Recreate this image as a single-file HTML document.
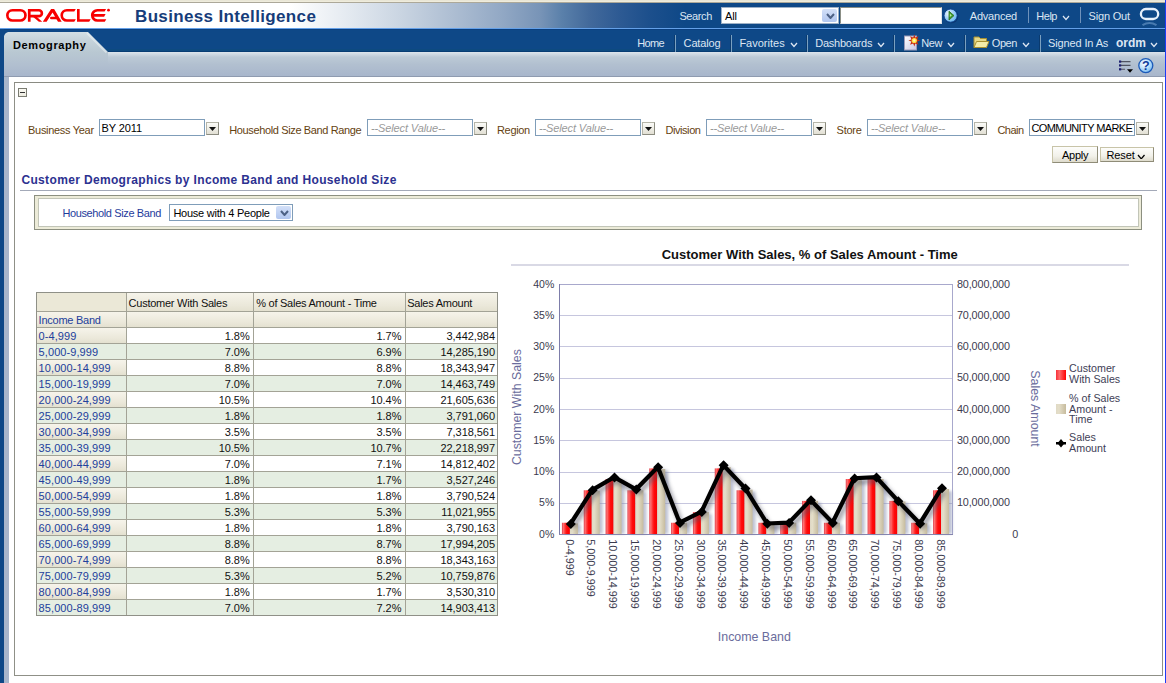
<!DOCTYPE html><html><head><meta charset="utf-8"><style>html,body{margin:0;padding:0;}body{width:1166px;height:683px;overflow:hidden;position:relative;background:#fff;font-family:"Liberation Sans", sans-serif;}body div,body svg{position:absolute;white-space:nowrap;}</style></head><body><div style="left:0px;top:0px;width:1166px;height:1px;background:#e9e6d6"></div>
<div style="left:0px;top:1px;width:1166px;height:1px;background:#efecdc"></div>
<div style="left:0px;top:2px;width:1166px;height:1px;background:#aca899"></div>
<div style="left:0px;top:3px;width:1166px;height:25px;background:linear-gradient(to right,#fff 0px,#fff 290px,#e3e9f0 350px,#cad5e2 400px,#afbfd3 450px,#93a9c5 500px,#7894b7 540px,#5a80aa 562px,#42699b 590px,#2d5a93 620px,#1c4f8c 650px,#0e4887 685px,#0e4887 1166px)"></div>
<div style="left:0px;top:28px;width:1166px;height:1px;background:#64a0e8"></div>
<div style="left:0px;top:29px;width:1166px;height:1px;background:#0a3f7f"></div>
<div style="left:0px;top:30px;width:1166px;height:19px;background:#0e4887"></div>
<div style="left:0px;top:49px;width:1166px;height:2px;background:#0d4a80"></div>
<div style="left:0px;top:51px;width:1166px;height:1px;background:#073d73"></div>
<div style="left:0px;top:52px;width:1166px;height:24px;background:linear-gradient(#dde5ec 0px,#bccad6 5px,#b2c0d0 12px,#a9b7cc 23px)"></div>
<div style="left:0px;top:76px;width:1166px;height:1px;background:#8f9bb0"></div>
<div style="left:0px;top:29px;width:4px;height:654px;background:#0e4887"></div>
<div style="left:4px;top:77px;width:5px;height:606px;background:#a8b6cb"></div>
<div style="left:1165px;top:0px;width:1px;height:683px;background:#1d3cf5"></div>
<div style="left:4px;top:32px;width:104px;height:44px;background:linear-gradient(#d3dfe5 0px,#c6d3db 8px,#b9c8d2 20px,#b2c0d0 32px,#a9b7cc 43px);clip-path:polygon(0 4px,1px 2px,2px 1px,4px 0,84px 0,104px 20px,104px 44px,0 44px);"></div>
<svg style="left:0;top:0" width="120" height="60"><path d="M87 33 L106.5 52.5" stroke="#eef4f6" stroke-width="2" opacity="0.55"/></svg>
<div style="left:13px;top:37.99px;font-size:11px;line-height:14px;color:#000;font-weight:bold;letter-spacing:0.62px;">Demography</div>
<svg style="left:0;top:0" width="120" height="28" viewBox="0 0 120 28"><g fill="#f80000">
<path fill="none" stroke="#f80000" stroke-width="2.65" d="M12.45 10.23 H20.35 A5.12 5.12 0 0 1 20.35 20.47 H12.45 A5.12 5.12 0 0 1 12.45 10.23 Z"/>
<path fill-rule="evenodd" d="M27.9 8.9 H38.95 A4.25 4.25 0 0 1 38.95 17.4 H30.6 V21.8 H27.9 Z M30.6 11.55 V14.75 H38.95 A1.6 1.6 0 0 0 38.95 11.55 Z"/>
<path d="M31.1 15.3 H35 L42.2 21.8 H38.9 Z"/>
<path d="M42.8 21.8 L51.1 8.9 H54.1 L61.7 21.8 H58 L52.55 12.55 L46.6 21.8 Z"/>
<path d="M51.35 16.65 H56.5 L57.2 19.35 H51.35 A1.35 1.35 0 0 1 51.35 16.65 Z"/>
<path d="M66.85 8.9 H75.8 L74.3 11.55 H66.85 A3.8 3.8 0 0 0 66.85 19.15 H75.8 L74.3 21.8 H66.85 A6.45 6.45 0 0 1 66.85 8.9 Z"/>
<path d="M77 8.9 H79.65 V19.15 H90.7 L89.2 21.8 H77 Z"/>
<path d="M97.35 8.9 H106.1 L104.6 11.55 H97.35 A3.8 3.8 0 0 0 93.8 14.05 H105.6 L104.1 16.7 H93.8 A3.8 3.8 0 0 0 97.35 19.15 H106.3 L104.8 21.8 H97.35 A6.45 6.45 0 0 1 97.35 8.9 Z"/>
<circle cx="108.5" cy="10.2" r="1.4"/>
</g></svg>
<div style="left:135px;top:6.01px;font-size:17px;line-height:21px;color:#163c7a;font-weight:bold;letter-spacing:0.35px;">Business Intelligence</div>
<div style="left:679.4px;top:9.19px;font-size:11px;line-height:14px;color:#dce6f2;letter-spacing:-0.38px;">Search</div>
<div style="left:721px;top:7px;width:118px;height:17px;background:#fff;box-sizing:border-box;border:1px solid #9eb0c6"></div>
<div style="left:725px;top:9.19px;font-size:11px;line-height:14px;color:#000;letter-spacing:-0.2px;">All</div>
<div style="left:822px;top:9px;width:15px;height:13px;background:linear-gradient(#d3e0f8,#b1c6ef);border-radius:2px"></div>
<svg style="left:825.5px;top:12.5px" width="9" height="6"><path d="M1 1 L4.5 5 L8 1" fill="none" stroke="#4d6185" stroke-width="2"/></svg>
<div style="left:840px;top:7px;width:102px;height:17px;background:#fff;box-sizing:border-box;border:1px solid #8b8f86;border-right-color:#dfe3e8;border-bottom-color:#dfe3e8"></div>
<svg style="left:942px;top:7px" width="18" height="18"><defs><radialGradient id="gb" cx="35%" cy="35%" r="75%"><stop offset="0" stop-color="#f0f8ff"/><stop offset="0.45" stop-color="#a8d4fa"/><stop offset="1" stop-color="#5ab0f0"/></radialGradient></defs><circle cx="9.3" cy="9.3" r="7" fill="#062a60" opacity="0.6"/><circle cx="8.6" cy="8.6" r="6.6" fill="url(#gb)" stroke="#0d3f8a" stroke-width="0.9"/><path d="M7 4.2 L12 8.6 L7 13 Z" fill="#3c9a2c" stroke="#2a6e1c" stroke-width="0.8" stroke-linejoin="round"/><path d="M7.8 6.5 L9.8 8.4 L7.8 10 Z" fill="#b8e8a0"/></svg>
<div style="left:969.8px;top:9.19px;font-size:11px;line-height:14px;color:#dce6f2;letter-spacing:-0.22px;">Advanced</div>
<div style="left:1028px;top:7px;width:1px;height:16px;background:#6f92bb"></div>
<div style="left:1036.3px;top:9.19px;font-size:11px;line-height:14px;color:#dce6f2;letter-spacing:-0.48px;">Help</div>
<svg style="left:1062px;top:15px" width="8" height="5.5"><path d="M1 1 L4.0 4.5 L7 1" fill="none" stroke="#dce6f2" stroke-width="1.2"/></svg>
<div style="left:1080px;top:7px;width:1px;height:16px;background:#6f92bb"></div>
<div style="left:1088.6px;top:9.19px;font-size:11px;line-height:14px;color:#dce6f2;letter-spacing:-0.2px;">Sign Out</div>
<svg style="left:1138px;top:6px" width="24" height="22"><rect x="2.9" y="3" width="17.3" height="10" rx="5" ry="5" fill="none" stroke="#e6f0fb" stroke-width="2.3"/><path d="M4.5 19.2 Q11.5 14.8 18.5 19.2" fill="none" stroke="#6f9ccc" stroke-width="2" opacity="0.6"/></svg>
<div style="left:637.3px;top:36.39px;font-size:11px;line-height:14px;color:#dce6f2;letter-spacing:-0.66px;">Home</div>
<div style="left:674px;top:35px;width:1px;height:17px;background:#0a3a6e"></div>
<div style="left:675px;top:35px;width:1px;height:17px;background:#7aa0c0"></div>
<div style="left:683.6px;top:36.39px;font-size:11px;line-height:14px;color:#dce6f2;letter-spacing:-0.16px;">Catalog</div>
<div style="left:730px;top:35px;width:1px;height:17px;background:#0a3a6e"></div>
<div style="left:731px;top:35px;width:1px;height:17px;background:#7aa0c0"></div>
<div style="left:739.4px;top:36.39px;font-size:11px;line-height:14px;color:#dce6f2;">Favorites</div>
<svg style="left:789.5px;top:42px" width="8" height="5.5"><path d="M1 1 L4.0 4.5 L7 1" fill="none" stroke="#dce6f2" stroke-width="1.3"/></svg>
<div style="left:806px;top:35px;width:1px;height:17px;background:#0a3a6e"></div>
<div style="left:807px;top:35px;width:1px;height:17px;background:#7aa0c0"></div>
<div style="left:815.2px;top:36.39px;font-size:11px;line-height:14px;color:#dce6f2;letter-spacing:-0.23px;">Dashboards</div>
<svg style="left:877px;top:42px" width="8" height="5.5"><path d="M1 1 L4.0 4.5 L7 1" fill="none" stroke="#dce6f2" stroke-width="1.3"/></svg>
<div style="left:893px;top:35px;width:1px;height:17px;background:#0a3a6e"></div>
<div style="left:894px;top:35px;width:1px;height:17px;background:#7aa0c0"></div>
<svg style="left:903px;top:34px" width="18" height="17"><defs><linearGradient id="pg" x1="0" x2="1" y1="0" y2="1"><stop offset="0" stop-color="#ffffff"/><stop offset="1" stop-color="#c8c8e4"/></linearGradient></defs><rect x="1.5" y="2" width="12" height="14" fill="url(#pg)" stroke="#9a9ab8" stroke-width="1"/><path d="M11.3 0.6 L12.4 3.6 L15.5 2.3 L14.2 5.4 L17.2 6.5 L14.2 7.6 L15.5 10.7 L12.4 9.4 L11.3 12.4 L10.2 9.4 L7.1 10.7 L8.4 7.6 L5.4 6.5 L8.4 5.4 L7.1 2.3 L10.2 3.6 Z" fill="#c83010"/><circle cx="11.3" cy="6.5" r="2.6" fill="#ffe040"/><circle cx="11.3" cy="6.5" r="1.2" fill="#fff8c0"/></svg>
<div style="left:921.2px;top:36.39px;font-size:11px;line-height:14px;color:#dce6f2;letter-spacing:-0.4px;">New</div>
<svg style="left:947px;top:42px" width="8" height="5.5"><path d="M1 1 L4.0 4.5 L7 1" fill="none" stroke="#dce6f2" stroke-width="1.3"/></svg>
<div style="left:964px;top:35px;width:1px;height:17px;background:#0a3a6e"></div>
<div style="left:965px;top:35px;width:1px;height:17px;background:#7aa0c0"></div>
<svg style="left:973px;top:35px" width="17" height="14"><path d="M1 2 H6 L7.5 3.5 H13.5 V12.5 H1 Z" fill="#e6d888" stroke="#a89030" stroke-width="1"/><path d="M1 12.5 L3.5 6.5 H16 L13.5 12.5 Z" fill="#f4eca8" stroke="#a89030" stroke-width="1" stroke-linejoin="round"/></svg>
<div style="left:991.8px;top:36.39px;font-size:11px;line-height:14px;color:#dce6f2;letter-spacing:-0.43px;">Open</div>
<svg style="left:1022px;top:42px" width="8" height="5.5"><path d="M1 1 L4.0 4.5 L7 1" fill="none" stroke="#dce6f2" stroke-width="1.3"/></svg>
<div style="left:1039px;top:35px;width:1px;height:17px;background:#0a3a6e"></div>
<div style="left:1040px;top:35px;width:1px;height:17px;background:#7aa0c0"></div>
<div style="left:1048px;top:36.39px;font-size:11px;line-height:14px;color:#dce6f2;letter-spacing:-0.13px;">Signed In As</div>
<div style="left:1116px;top:35.54px;font-size:12px;line-height:15px;color:#dce6f2;font-weight:bold;">ordm</div>
<svg style="left:1150px;top:42px" width="8" height="5.5"><path d="M1 1 L4.0 4.5 L7 1" fill="none" stroke="#dce6f2" stroke-width="1.3"/></svg>
<svg style="left:1118px;top:59px" width="17" height="16"><g stroke="#505460" stroke-width="1.1"><path d="M3 2.6 H12.5 M3 6.4 H12.5 M3 10.3 H7"/></g><g fill="#1c1f70"><rect x="1" y="1.5" width="2.2" height="2.2"/><rect x="1" y="5.3" width="2.2" height="2.2"/><rect x="1" y="9.2" width="2.2" height="2.2"/></g><path d="M9 10.2 H15 L12 13.8 Z" fill="#000"/></svg>
<svg style="left:1137px;top:57px" width="18" height="18"><defs><radialGradient id="hb" cx="40%" cy="35%" r="70%"><stop offset="0" stop-color="#ffffff"/><stop offset="0.5" stop-color="#bfe2fc"/><stop offset="1" stop-color="#6fb4ef"/></radialGradient></defs><circle cx="8.8" cy="8.6" r="7" fill="url(#hb)" stroke="#1b5ab8" stroke-width="1.3"/><text x="8.8" y="12.9" text-anchor="middle" font-family="Liberation Sans" font-weight="bold" font-size="12.5" fill="#0e3c9a">?</text></svg>
<div style="left:14px;top:82px;width:1149px;height:594px;box-sizing:border-box;border:1px solid #8f9087;border-top-color:#8a8b82"></div>
<div style="left:18px;top:88px;width:9px;height:9px;box-sizing:border-box;border:1px solid #7b7c72;background:linear-gradient(#fbfaf3,#ecebe0)"></div>
<div style="left:20px;top:92px;width:5px;height:1px;background:#333"></div>
<div style="left:28.1px;top:122.89px;font-size:11px;line-height:14px;color:#654210;letter-spacing:-0.31px;">Business Year</div>
<div style="left:99px;top:119px;width:106px;height:17px;box-sizing:border-box;border:1px solid #7f9db9;background:#fff"></div>
<div style="left:101.5px;top:120.69px;font-size:11px;line-height:14px;color:#000;letter-spacing:-0.1px;">BY 2011</div>
<div style="left:206px;top:121.5px;width:13px;height:13px;box-sizing:border-box;border:1px solid #b5b5a8;border-right-color:#8c8c80;border-bottom-color:#8c8c80;background:linear-gradient(#fbfbf8,#e2e0d4)"></div>
<svg style="left:209px;top:126.5px" width="8" height="5"><path d="M0 0 H7 L3.5 4 Z" fill="#111"/></svg>
<div style="left:229.3px;top:122.89px;font-size:11px;line-height:14px;color:#654210;letter-spacing:-0.37px;">Household Size Band Range</div>
<div style="left:367px;top:119px;width:106px;height:17px;box-sizing:border-box;border:1px solid #7f9db9;background:#fff"></div>
<div style="left:371px;top:120.89px;font-size:11px;line-height:14px;color:#9a9a9a;letter-spacing:-0.12px;font-style:italic;">--Select Value--</div>
<div style="left:474px;top:121.5px;width:13px;height:13px;box-sizing:border-box;border:1px solid #b5b5a8;border-right-color:#8c8c80;border-bottom-color:#8c8c80;background:linear-gradient(#fbfbf8,#e2e0d4)"></div>
<svg style="left:477px;top:126.5px" width="8" height="5"><path d="M0 0 H7 L3.5 4 Z" fill="#111"/></svg>
<div style="left:497px;top:122.89px;font-size:11px;line-height:14px;color:#654210;letter-spacing:-0.34px;">Region</div>
<div style="left:535px;top:119px;width:106px;height:17px;box-sizing:border-box;border:1px solid #7f9db9;background:#fff"></div>
<div style="left:539px;top:120.89px;font-size:11px;line-height:14px;color:#9a9a9a;letter-spacing:-0.12px;font-style:italic;">--Select Value--</div>
<div style="left:642px;top:121.5px;width:13px;height:13px;box-sizing:border-box;border:1px solid #b5b5a8;border-right-color:#8c8c80;border-bottom-color:#8c8c80;background:linear-gradient(#fbfbf8,#e2e0d4)"></div>
<svg style="left:645px;top:126.5px" width="8" height="5"><path d="M0 0 H7 L3.5 4 Z" fill="#111"/></svg>
<div style="left:665.4px;top:122.89px;font-size:11px;line-height:14px;color:#654210;letter-spacing:-0.42px;">Division</div>
<div style="left:706px;top:119px;width:106px;height:17px;box-sizing:border-box;border:1px solid #7f9db9;background:#fff"></div>
<div style="left:710px;top:120.89px;font-size:11px;line-height:14px;color:#9a9a9a;letter-spacing:-0.12px;font-style:italic;">--Select Value--</div>
<div style="left:813px;top:121.5px;width:13px;height:13px;box-sizing:border-box;border:1px solid #b5b5a8;border-right-color:#8c8c80;border-bottom-color:#8c8c80;background:linear-gradient(#fbfbf8,#e2e0d4)"></div>
<svg style="left:816px;top:126.5px" width="8" height="5"><path d="M0 0 H7 L3.5 4 Z" fill="#111"/></svg>
<div style="left:836.6px;top:122.89px;font-size:11px;line-height:14px;color:#654210;letter-spacing:-0.26px;">Store</div>
<div style="left:867px;top:119px;width:106px;height:17px;box-sizing:border-box;border:1px solid #7f9db9;background:#fff"></div>
<div style="left:871px;top:120.89px;font-size:11px;line-height:14px;color:#9a9a9a;letter-spacing:-0.12px;font-style:italic;">--Select Value--</div>
<div style="left:974px;top:121.5px;width:13px;height:13px;box-sizing:border-box;border:1px solid #b5b5a8;border-right-color:#8c8c80;border-bottom-color:#8c8c80;background:linear-gradient(#fbfbf8,#e2e0d4)"></div>
<svg style="left:977px;top:126.5px" width="8" height="5"><path d="M0 0 H7 L3.5 4 Z" fill="#111"/></svg>
<div style="left:997.4px;top:122.89px;font-size:11px;line-height:14px;color:#654210;letter-spacing:-0.5px;">Chain</div>
<div style="left:1029px;top:119px;width:106px;height:17px;box-sizing:border-box;border:1px solid #7f9db9;background:#fff"></div>
<div style="left:1030px;top:120px;width:104px;height:15px;overflow:hidden"><div style="left:1.5px;top:1px;font-size:11px;line-height:15px;color:#000;letter-spacing:-0.6px">COMMUNITY MARKET</div></div>
<div style="left:1136px;top:121.5px;width:13px;height:13px;box-sizing:border-box;border:1px solid #b5b5a8;border-right-color:#8c8c80;border-bottom-color:#8c8c80;background:linear-gradient(#fbfbf8,#e2e0d4)"></div>
<svg style="left:1139px;top:126.5px" width="8" height="5"><path d="M0 0 H7 L3.5 4 Z" fill="#111"/></svg>
<div style="left:1052px;top:146px;width:46px;height:17px;box-sizing:border-box;border:1px solid #c8c4a8;border-right-color:#8f8c78;border-bottom-color:#8f8c78;background:linear-gradient(#fdfdfb,#f2f1ea 60%,#dedbcc)"></div>
<div style="left:1062px;top:148.39px;font-size:11px;line-height:14px;color:#000;letter-spacing:-0.27px;">Apply</div>
<div style="left:1100px;top:147px;width:54px;height:15px;box-sizing:border-box;border:1px solid #c8c4a8;border-right-color:#8f8c78;border-bottom-color:#8f8c78;background:linear-gradient(#fdfdfb,#f2f1ea 60%,#dedbcc)"></div>
<div style="left:1106.4px;top:148.39px;font-size:11px;line-height:14px;color:#000;letter-spacing:-0.1px;">Reset</div>
<svg style="left:1137.2px;top:153.6px" width="8.5" height="5.8"><path d="M1 1 L4.25 4.8 L7.5 1" fill="none" stroke="#000" stroke-width="1.3"/></svg>
<div style="left:21.4px;top:173.44px;font-size:12px;line-height:15px;color:#2c3190;font-weight:bold;letter-spacing:0.35px;">Customer Demographics by Income Band and Household Size</div>
<div style="left:20px;top:190px;width:1137px;height:1px;background:#a3a9b8"></div>
<div style="left:34px;top:195px;width:1108px;height:35px;box-sizing:border-box;border:1px solid #8c8f80;background:#ecebd8"></div>
<div style="left:38px;top:198px;width:1101px;height:29px;box-sizing:border-box;border:1px solid #c2c5b8;background:#fff"></div>
<div style="left:62.4px;top:205.89px;font-size:11px;line-height:14px;color:#1f3c9c;letter-spacing:-0.38px;">Household Size Band</div>
<div style="left:169px;top:204px;width:124px;height:17px;box-sizing:border-box;border:1px solid #7f9db9;background:#fff"></div>
<div style="left:173.4px;top:205.79px;font-size:11px;line-height:14px;color:#000;letter-spacing:-0.24px;">House with 4 People</div>
<div style="left:276px;top:206px;width:15px;height:13px;background:linear-gradient(#d3e0f8,#b1c6ef);border-radius:2px"></div>
<svg style="left:279.5px;top:209.5px" width="9" height="6"><path d="M1 1 L4.5 5 L8 1" fill="none" stroke="#4d6185" stroke-width="2"/></svg>
<div style="left:36px;top:292px;width:90px;height:19px;background:#ebe8d7"></div>
<div style="left:126px;top:292px;width:372px;height:19px;background:linear-gradient(#f7f5ec,#ebe8da 70%,#e4e1d0)"></div>
<div style="left:36px;top:311px;width:462px;height:16px;background:linear-gradient(#f7f5ec,#ebe8da 70%,#e4e1d0)"></div>
<div style="left:36px;top:327px;width:90px;height:16px;background:linear-gradient(#f7f5ec,#ebe8da 70%,#e4e1d0)"></div>
<div style="left:36px;top:343px;width:462px;height:16px;background:#e5eee2"></div>
<div style="left:36px;top:359px;width:90px;height:16px;background:linear-gradient(#f7f5ec,#ebe8da 70%,#e4e1d0)"></div>
<div style="left:36px;top:375px;width:462px;height:16px;background:#e5eee2"></div>
<div style="left:36px;top:391px;width:90px;height:16px;background:linear-gradient(#f7f5ec,#ebe8da 70%,#e4e1d0)"></div>
<div style="left:36px;top:407px;width:462px;height:16px;background:#e5eee2"></div>
<div style="left:36px;top:423px;width:90px;height:16px;background:linear-gradient(#f7f5ec,#ebe8da 70%,#e4e1d0)"></div>
<div style="left:36px;top:439px;width:462px;height:16px;background:#e5eee2"></div>
<div style="left:36px;top:455px;width:90px;height:16px;background:linear-gradient(#f7f5ec,#ebe8da 70%,#e4e1d0)"></div>
<div style="left:36px;top:471px;width:462px;height:16px;background:#e5eee2"></div>
<div style="left:36px;top:487px;width:90px;height:16px;background:linear-gradient(#f7f5ec,#ebe8da 70%,#e4e1d0)"></div>
<div style="left:36px;top:503px;width:462px;height:16px;background:#e5eee2"></div>
<div style="left:36px;top:519px;width:90px;height:16px;background:linear-gradient(#f7f5ec,#ebe8da 70%,#e4e1d0)"></div>
<div style="left:36px;top:535px;width:462px;height:16px;background:#e5eee2"></div>
<div style="left:36px;top:551px;width:90px;height:16px;background:linear-gradient(#f7f5ec,#ebe8da 70%,#e4e1d0)"></div>
<div style="left:36px;top:567px;width:462px;height:16px;background:#e5eee2"></div>
<div style="left:36px;top:583px;width:90px;height:16px;background:linear-gradient(#f7f5ec,#ebe8da 70%,#e4e1d0)"></div>
<div style="left:36px;top:599px;width:462px;height:16px;background:#e5eee2"></div>
<div style="left:126px;top:292px;width:1px;height:323px;background:#a3a396"></div>
<div style="left:253px;top:292px;width:1px;height:323px;background:#a3a396"></div>
<div style="left:405px;top:292px;width:1px;height:323px;background:#a3a396"></div>
<div style="left:36px;top:311px;width:462px;height:1px;background:#a3a396"></div>
<div style="left:36px;top:327px;width:462px;height:1px;background:#a3a396"></div>
<div style="left:36px;top:343px;width:462px;height:1px;background:#a3a396"></div>
<div style="left:36px;top:359px;width:462px;height:1px;background:#a3a396"></div>
<div style="left:36px;top:375px;width:462px;height:1px;background:#a3a396"></div>
<div style="left:36px;top:391px;width:462px;height:1px;background:#a3a396"></div>
<div style="left:36px;top:407px;width:462px;height:1px;background:#a3a396"></div>
<div style="left:36px;top:423px;width:462px;height:1px;background:#a3a396"></div>
<div style="left:36px;top:439px;width:462px;height:1px;background:#a3a396"></div>
<div style="left:36px;top:455px;width:462px;height:1px;background:#a3a396"></div>
<div style="left:36px;top:471px;width:462px;height:1px;background:#a3a396"></div>
<div style="left:36px;top:487px;width:462px;height:1px;background:#a3a396"></div>
<div style="left:36px;top:503px;width:462px;height:1px;background:#a3a396"></div>
<div style="left:36px;top:519px;width:462px;height:1px;background:#a3a396"></div>
<div style="left:36px;top:535px;width:462px;height:1px;background:#a3a396"></div>
<div style="left:36px;top:551px;width:462px;height:1px;background:#a3a396"></div>
<div style="left:36px;top:567px;width:462px;height:1px;background:#a3a396"></div>
<div style="left:36px;top:583px;width:462px;height:1px;background:#a3a396"></div>
<div style="left:36px;top:599px;width:462px;height:1px;background:#a3a396"></div>
<div style="left:36px;top:292px;width:462px;height:324px;box-sizing:border-box;border:1px solid #8f9087"></div>
<div style="left:128.6px;top:295.79px;font-size:11px;line-height:14px;color:#111;letter-spacing:-0.25px;">Customer With Sales</div>
<div style="left:256.2px;top:295.79px;font-size:11px;line-height:14px;color:#111;letter-spacing:-0.25px;">% of Sales Amount - Time</div>
<div style="left:407.2px;top:295.79px;font-size:11px;line-height:14px;color:#111;letter-spacing:-0.25px;">Sales Amount</div>
<div style="left:38.6px;top:312.59px;font-size:11px;line-height:14px;color:#22409c;letter-spacing:-0.25px;">Income Band</div>
<div style="left:38.6px;top:329.49px;font-size:11px;line-height:14px;color:#22409c;letter-spacing:0.08px;">0-4,999</div>
<div style="right:916.4px;text-align:right;top:329.49px;font-size:11px;line-height:14px;color:#111;letter-spacing:-0.05px;">1.8%</div>
<div style="right:764.6px;text-align:right;top:329.49px;font-size:11px;line-height:14px;color:#111;letter-spacing:-0.05px;">1.7%</div>
<div style="right:671px;text-align:right;top:329.49px;font-size:11px;line-height:14px;color:#111;letter-spacing:-0.05px;">3,442,984</div>
<div style="left:38.6px;top:345.49px;font-size:11px;line-height:14px;color:#22409c;letter-spacing:0.08px;">5,000-9,999</div>
<div style="right:916.4px;text-align:right;top:345.49px;font-size:11px;line-height:14px;color:#111;letter-spacing:-0.05px;">7.0%</div>
<div style="right:764.6px;text-align:right;top:345.49px;font-size:11px;line-height:14px;color:#111;letter-spacing:-0.05px;">6.9%</div>
<div style="right:671px;text-align:right;top:345.49px;font-size:11px;line-height:14px;color:#111;letter-spacing:-0.05px;">14,285,190</div>
<div style="left:38.6px;top:361.49px;font-size:11px;line-height:14px;color:#22409c;letter-spacing:0.08px;">10,000-14,999</div>
<div style="right:916.4px;text-align:right;top:361.49px;font-size:11px;line-height:14px;color:#111;letter-spacing:-0.05px;">8.8%</div>
<div style="right:764.6px;text-align:right;top:361.49px;font-size:11px;line-height:14px;color:#111;letter-spacing:-0.05px;">8.8%</div>
<div style="right:671px;text-align:right;top:361.49px;font-size:11px;line-height:14px;color:#111;letter-spacing:-0.05px;">18,343,947</div>
<div style="left:38.6px;top:377.49px;font-size:11px;line-height:14px;color:#22409c;letter-spacing:0.08px;">15,000-19,999</div>
<div style="right:916.4px;text-align:right;top:377.49px;font-size:11px;line-height:14px;color:#111;letter-spacing:-0.05px;">7.0%</div>
<div style="right:764.6px;text-align:right;top:377.49px;font-size:11px;line-height:14px;color:#111;letter-spacing:-0.05px;">7.0%</div>
<div style="right:671px;text-align:right;top:377.49px;font-size:11px;line-height:14px;color:#111;letter-spacing:-0.05px;">14,463,749</div>
<div style="left:38.6px;top:393.49px;font-size:11px;line-height:14px;color:#22409c;letter-spacing:0.08px;">20,000-24,999</div>
<div style="right:916.4px;text-align:right;top:393.49px;font-size:11px;line-height:14px;color:#111;letter-spacing:-0.05px;">10.5%</div>
<div style="right:764.6px;text-align:right;top:393.49px;font-size:11px;line-height:14px;color:#111;letter-spacing:-0.05px;">10.4%</div>
<div style="right:671px;text-align:right;top:393.49px;font-size:11px;line-height:14px;color:#111;letter-spacing:-0.05px;">21,605,636</div>
<div style="left:38.6px;top:409.49px;font-size:11px;line-height:14px;color:#22409c;letter-spacing:0.08px;">25,000-29,999</div>
<div style="right:916.4px;text-align:right;top:409.49px;font-size:11px;line-height:14px;color:#111;letter-spacing:-0.05px;">1.8%</div>
<div style="right:764.6px;text-align:right;top:409.49px;font-size:11px;line-height:14px;color:#111;letter-spacing:-0.05px;">1.8%</div>
<div style="right:671px;text-align:right;top:409.49px;font-size:11px;line-height:14px;color:#111;letter-spacing:-0.05px;">3,791,060</div>
<div style="left:38.6px;top:425.49px;font-size:11px;line-height:14px;color:#22409c;letter-spacing:0.08px;">30,000-34,999</div>
<div style="right:916.4px;text-align:right;top:425.49px;font-size:11px;line-height:14px;color:#111;letter-spacing:-0.05px;">3.5%</div>
<div style="right:764.6px;text-align:right;top:425.49px;font-size:11px;line-height:14px;color:#111;letter-spacing:-0.05px;">3.5%</div>
<div style="right:671px;text-align:right;top:425.49px;font-size:11px;line-height:14px;color:#111;letter-spacing:-0.05px;">7,318,561</div>
<div style="left:38.6px;top:441.49px;font-size:11px;line-height:14px;color:#22409c;letter-spacing:0.08px;">35,000-39,999</div>
<div style="right:916.4px;text-align:right;top:441.49px;font-size:11px;line-height:14px;color:#111;letter-spacing:-0.05px;">10.5%</div>
<div style="right:764.6px;text-align:right;top:441.49px;font-size:11px;line-height:14px;color:#111;letter-spacing:-0.05px;">10.7%</div>
<div style="right:671px;text-align:right;top:441.49px;font-size:11px;line-height:14px;color:#111;letter-spacing:-0.05px;">22,218,997</div>
<div style="left:38.6px;top:457.49px;font-size:11px;line-height:14px;color:#22409c;letter-spacing:0.08px;">40,000-44,999</div>
<div style="right:916.4px;text-align:right;top:457.49px;font-size:11px;line-height:14px;color:#111;letter-spacing:-0.05px;">7.0%</div>
<div style="right:764.6px;text-align:right;top:457.49px;font-size:11px;line-height:14px;color:#111;letter-spacing:-0.05px;">7.1%</div>
<div style="right:671px;text-align:right;top:457.49px;font-size:11px;line-height:14px;color:#111;letter-spacing:-0.05px;">14,812,402</div>
<div style="left:38.6px;top:473.49px;font-size:11px;line-height:14px;color:#22409c;letter-spacing:0.08px;">45,000-49,999</div>
<div style="right:916.4px;text-align:right;top:473.49px;font-size:11px;line-height:14px;color:#111;letter-spacing:-0.05px;">1.8%</div>
<div style="right:764.6px;text-align:right;top:473.49px;font-size:11px;line-height:14px;color:#111;letter-spacing:-0.05px;">1.7%</div>
<div style="right:671px;text-align:right;top:473.49px;font-size:11px;line-height:14px;color:#111;letter-spacing:-0.05px;">3,527,246</div>
<div style="left:38.6px;top:489.49px;font-size:11px;line-height:14px;color:#22409c;letter-spacing:0.08px;">50,000-54,999</div>
<div style="right:916.4px;text-align:right;top:489.49px;font-size:11px;line-height:14px;color:#111;letter-spacing:-0.05px;">1.8%</div>
<div style="right:764.6px;text-align:right;top:489.49px;font-size:11px;line-height:14px;color:#111;letter-spacing:-0.05px;">1.8%</div>
<div style="right:671px;text-align:right;top:489.49px;font-size:11px;line-height:14px;color:#111;letter-spacing:-0.05px;">3,790,524</div>
<div style="left:38.6px;top:505.49px;font-size:11px;line-height:14px;color:#22409c;letter-spacing:0.08px;">55,000-59,999</div>
<div style="right:916.4px;text-align:right;top:505.49px;font-size:11px;line-height:14px;color:#111;letter-spacing:-0.05px;">5.3%</div>
<div style="right:764.6px;text-align:right;top:505.49px;font-size:11px;line-height:14px;color:#111;letter-spacing:-0.05px;">5.3%</div>
<div style="right:671px;text-align:right;top:505.49px;font-size:11px;line-height:14px;color:#111;letter-spacing:-0.05px;">11,021,955</div>
<div style="left:38.6px;top:521.49px;font-size:11px;line-height:14px;color:#22409c;letter-spacing:0.08px;">60,000-64,999</div>
<div style="right:916.4px;text-align:right;top:521.49px;font-size:11px;line-height:14px;color:#111;letter-spacing:-0.05px;">1.8%</div>
<div style="right:764.6px;text-align:right;top:521.49px;font-size:11px;line-height:14px;color:#111;letter-spacing:-0.05px;">1.8%</div>
<div style="right:671px;text-align:right;top:521.49px;font-size:11px;line-height:14px;color:#111;letter-spacing:-0.05px;">3,790,163</div>
<div style="left:38.6px;top:537.49px;font-size:11px;line-height:14px;color:#22409c;letter-spacing:0.08px;">65,000-69,999</div>
<div style="right:916.4px;text-align:right;top:537.49px;font-size:11px;line-height:14px;color:#111;letter-spacing:-0.05px;">8.8%</div>
<div style="right:764.6px;text-align:right;top:537.49px;font-size:11px;line-height:14px;color:#111;letter-spacing:-0.05px;">8.7%</div>
<div style="right:671px;text-align:right;top:537.49px;font-size:11px;line-height:14px;color:#111;letter-spacing:-0.05px;">17,994,205</div>
<div style="left:38.6px;top:553.49px;font-size:11px;line-height:14px;color:#22409c;letter-spacing:0.08px;">70,000-74,999</div>
<div style="right:916.4px;text-align:right;top:553.49px;font-size:11px;line-height:14px;color:#111;letter-spacing:-0.05px;">8.8%</div>
<div style="right:764.6px;text-align:right;top:553.49px;font-size:11px;line-height:14px;color:#111;letter-spacing:-0.05px;">8.8%</div>
<div style="right:671px;text-align:right;top:553.49px;font-size:11px;line-height:14px;color:#111;letter-spacing:-0.05px;">18,343,163</div>
<div style="left:38.6px;top:569.49px;font-size:11px;line-height:14px;color:#22409c;letter-spacing:0.08px;">75,000-79,999</div>
<div style="right:916.4px;text-align:right;top:569.49px;font-size:11px;line-height:14px;color:#111;letter-spacing:-0.05px;">5.3%</div>
<div style="right:764.6px;text-align:right;top:569.49px;font-size:11px;line-height:14px;color:#111;letter-spacing:-0.05px;">5.2%</div>
<div style="right:671px;text-align:right;top:569.49px;font-size:11px;line-height:14px;color:#111;letter-spacing:-0.05px;">10,759,876</div>
<div style="left:38.6px;top:585.49px;font-size:11px;line-height:14px;color:#22409c;letter-spacing:0.08px;">80,000-84,999</div>
<div style="right:916.4px;text-align:right;top:585.49px;font-size:11px;line-height:14px;color:#111;letter-spacing:-0.05px;">1.8%</div>
<div style="right:764.6px;text-align:right;top:585.49px;font-size:11px;line-height:14px;color:#111;letter-spacing:-0.05px;">1.7%</div>
<div style="right:671px;text-align:right;top:585.49px;font-size:11px;line-height:14px;color:#111;letter-spacing:-0.05px;">3,530,310</div>
<div style="left:38.6px;top:601.49px;font-size:11px;line-height:14px;color:#22409c;letter-spacing:0.08px;">85,000-89,999</div>
<div style="right:916.4px;text-align:right;top:601.49px;font-size:11px;line-height:14px;color:#111;letter-spacing:-0.05px;">7.0%</div>
<div style="right:764.6px;text-align:right;top:601.49px;font-size:11px;line-height:14px;color:#111;letter-spacing:-0.05px;">7.2%</div>
<div style="right:671px;text-align:right;top:601.49px;font-size:11px;line-height:14px;color:#111;letter-spacing:-0.05px;">14,903,413</div>
<svg style="left:0;top:0" width="1166" height="683" viewBox="0 0 1166 683"><defs>
<linearGradient id="rg" x1="0" x2="1" y1="0" y2="0">
<stop offset="0" stop-color="#dc3a48"/><stop offset="0.18" stop-color="#ff7474"/><stop offset="0.38" stop-color="#ff3a3a"/>
<stop offset="0.6" stop-color="#ff0c0c"/><stop offset="1" stop-color="#f80000"/></linearGradient>
<linearGradient id="tg" x1="0" x2="1" y1="0" y2="0">
<stop offset="0" stop-color="#e0dac5"/><stop offset="0.3" stop-color="#e4dec9"/><stop offset="1" stop-color="#c6bb9d"/></linearGradient>
<linearGradient id="lg" x1="0" x2="1" y1="0" y2="0">
<stop offset="0" stop-color="#f8303a"/><stop offset="0.35" stop-color="#ff6a6a"/><stop offset="1" stop-color="#ff0000"/></linearGradient>
<filter id="sh" x="-50%" y="-20%" width="200%" height="140%"><feGaussianBlur stdDeviation="1.8"/></filter>
<filter id="lsh" x="-10%" y="-10%" width="120%" height="130%"><feGaussianBlur stdDeviation="2"/></filter>
</defs><text x="661.7" y="258.9" font-family="Liberation Sans" font-weight="bold" font-size="13" fill="#111">Customer With Sales, % of Sales Amount - Time</text><rect x="511" y="264" width="618" height="2" fill="#d9d9e5"/><rect x="559" y="315" width="393" height="1" fill="#c6c6de"/><rect x="559" y="346" width="393" height="1" fill="#c6c6de"/><rect x="559" y="378" width="393" height="1" fill="#c6c6de"/><rect x="559" y="409" width="393" height="1" fill="#c6c6de"/><rect x="559" y="440" width="393" height="1" fill="#c6c6de"/><rect x="559" y="472" width="393" height="1" fill="#c6c6de"/><rect x="559" y="503" width="393" height="1" fill="#c6c6de"/><rect x="559" y="284" width="394" height="1" fill="#a8a8cc"/><rect x="952" y="284" width="1" height="251" fill="#a8a8cc"/><rect x="564.92" y="524.75" width="16" height="9.25" fill="#8890b0" opacity="0.55" filter="url(#sh)"/><rect x="586.75" y="492.25" width="16" height="41.75" fill="#8890b0" opacity="0.55" filter="url(#sh)"/><rect x="608.58" y="481.00" width="16" height="53.00" fill="#8890b0" opacity="0.55" filter="url(#sh)"/><rect x="630.42" y="492.25" width="16" height="41.75" fill="#8890b0" opacity="0.55" filter="url(#sh)"/><rect x="652.25" y="470.38" width="16" height="63.62" fill="#8890b0" opacity="0.55" filter="url(#sh)"/><rect x="674.08" y="524.75" width="16" height="9.25" fill="#8890b0" opacity="0.55" filter="url(#sh)"/><rect x="695.92" y="514.12" width="16" height="19.88" fill="#8890b0" opacity="0.55" filter="url(#sh)"/><rect x="717.75" y="469.12" width="16" height="64.88" fill="#8890b0" opacity="0.55" filter="url(#sh)"/><rect x="739.58" y="491.62" width="16" height="42.38" fill="#8890b0" opacity="0.55" filter="url(#sh)"/><rect x="761.42" y="524.75" width="16" height="9.25" fill="#8890b0" opacity="0.55" filter="url(#sh)"/><rect x="783.25" y="524.75" width="16" height="9.25" fill="#8890b0" opacity="0.55" filter="url(#sh)"/><rect x="805.08" y="502.88" width="16" height="31.12" fill="#8890b0" opacity="0.55" filter="url(#sh)"/><rect x="826.92" y="524.75" width="16" height="9.25" fill="#8890b0" opacity="0.55" filter="url(#sh)"/><rect x="848.75" y="481.00" width="16" height="53.00" fill="#8890b0" opacity="0.55" filter="url(#sh)"/><rect x="870.58" y="481.00" width="16" height="53.00" fill="#8890b0" opacity="0.55" filter="url(#sh)"/><rect x="892.42" y="502.88" width="16" height="31.12" fill="#8890b0" opacity="0.55" filter="url(#sh)"/><rect x="914.25" y="524.75" width="16" height="9.25" fill="#8890b0" opacity="0.55" filter="url(#sh)"/><rect x="936.08" y="491.00" width="16" height="43.00" fill="#8890b0" opacity="0.55" filter="url(#sh)"/><rect x="561.92" y="522.75" width="8" height="11.25" fill="url(#rg)"/><rect x="569.92" y="523.38" width="8" height="10.62" fill="url(#tg)"/><rect x="583.75" y="490.25" width="8" height="43.75" fill="url(#rg)"/><rect x="591.75" y="490.88" width="8" height="43.12" fill="url(#tg)"/><rect x="605.58" y="479.00" width="8" height="55.00" fill="url(#rg)"/><rect x="613.58" y="479.00" width="8" height="55.00" fill="url(#tg)"/><rect x="627.42" y="490.25" width="8" height="43.75" fill="url(#rg)"/><rect x="635.42" y="490.25" width="8" height="43.75" fill="url(#tg)"/><rect x="649.25" y="468.38" width="8" height="65.62" fill="url(#rg)"/><rect x="657.25" y="469.00" width="8" height="65.00" fill="url(#tg)"/><rect x="671.08" y="522.75" width="8" height="11.25" fill="url(#rg)"/><rect x="679.08" y="522.75" width="8" height="11.25" fill="url(#tg)"/><rect x="692.92" y="512.12" width="8" height="21.88" fill="url(#rg)"/><rect x="700.92" y="512.12" width="8" height="21.88" fill="url(#tg)"/><rect x="714.75" y="468.38" width="8" height="65.62" fill="url(#rg)"/><rect x="722.75" y="467.12" width="8" height="66.88" fill="url(#tg)"/><rect x="736.58" y="490.25" width="8" height="43.75" fill="url(#rg)"/><rect x="744.58" y="489.62" width="8" height="44.38" fill="url(#tg)"/><rect x="758.42" y="522.75" width="8" height="11.25" fill="url(#rg)"/><rect x="766.42" y="523.38" width="8" height="10.62" fill="url(#tg)"/><rect x="780.25" y="522.75" width="8" height="11.25" fill="url(#rg)"/><rect x="788.25" y="522.75" width="8" height="11.25" fill="url(#tg)"/><rect x="802.08" y="500.88" width="8" height="33.12" fill="url(#rg)"/><rect x="810.08" y="500.88" width="8" height="33.12" fill="url(#tg)"/><rect x="823.92" y="522.75" width="8" height="11.25" fill="url(#rg)"/><rect x="831.92" y="522.75" width="8" height="11.25" fill="url(#tg)"/><rect x="845.75" y="479.00" width="8" height="55.00" fill="url(#rg)"/><rect x="853.75" y="479.62" width="8" height="54.38" fill="url(#tg)"/><rect x="867.58" y="479.00" width="8" height="55.00" fill="url(#rg)"/><rect x="875.58" y="479.00" width="8" height="55.00" fill="url(#tg)"/><rect x="889.42" y="500.88" width="8" height="33.12" fill="url(#rg)"/><rect x="897.42" y="501.50" width="8" height="32.50" fill="url(#tg)"/><rect x="911.25" y="522.75" width="8" height="11.25" fill="url(#rg)"/><rect x="919.25" y="523.38" width="8" height="10.62" fill="url(#tg)"/><rect x="933.08" y="490.25" width="8" height="43.75" fill="url(#rg)"/><rect x="941.08" y="489.00" width="8" height="45.00" fill="url(#tg)"/><rect x="559" y="284" width="1" height="251" fill="#7d7daa"/><rect x="559" y="534" width="394" height="1" fill="#8585ae"/><polyline points="572.92,527.24 594.75,493.36 616.58,480.68 638.42,492.80 660.25,470.48 682.08,526.15 703.92,515.13 725.75,468.57 747.58,491.71 769.42,526.98 791.25,526.15 813.08,503.56 834.92,526.16 856.75,481.77 878.58,480.68 900.42,504.38 922.25,526.97 944.08,491.43" fill="none" stroke="#505060" stroke-width="5" opacity="0.55" filter="url(#lsh)" stroke-linejoin="round"/><polyline points="570.52,523.74 592.35,489.86 614.18,477.18 636.02,489.30 657.85,466.98 679.68,522.65 701.52,511.63 723.35,465.07 745.18,488.21 767.02,523.48 788.85,522.65 810.68,500.06 832.52,522.66 854.35,478.27 876.18,477.18 898.02,500.88 919.85,523.47 941.68,487.93" fill="none" stroke="#000" stroke-width="4.2" stroke-linejoin="miter"/><path d="M565.82 524.04 L570.82 519.04 L575.82 524.04 L570.82 529.04 Z" fill="#000"/><path d="M587.65 490.16 L592.65 485.16 L597.65 490.16 L592.65 495.16 Z" fill="#000"/><path d="M609.48 477.48 L614.48 472.48 L619.48 477.48 L614.48 482.48 Z" fill="#000"/><path d="M631.32 489.60 L636.32 484.60 L641.32 489.60 L636.32 494.60 Z" fill="#000"/><path d="M653.15 467.28 L658.15 462.28 L663.15 467.28 L658.15 472.28 Z" fill="#000"/><path d="M674.98 522.95 L679.98 517.95 L684.98 522.95 L679.98 527.95 Z" fill="#000"/><path d="M696.82 511.93 L701.82 506.93 L706.82 511.93 L701.82 516.93 Z" fill="#000"/><path d="M718.65 465.37 L723.65 460.37 L728.65 465.37 L723.65 470.37 Z" fill="#000"/><path d="M740.48 488.51 L745.48 483.51 L750.48 488.51 L745.48 493.51 Z" fill="#000"/><path d="M762.32 523.78 L767.32 518.78 L772.32 523.78 L767.32 528.78 Z" fill="#000"/><path d="M784.15 522.95 L789.15 517.95 L794.15 522.95 L789.15 527.95 Z" fill="#000"/><path d="M805.98 500.36 L810.98 495.36 L815.98 500.36 L810.98 505.36 Z" fill="#000"/><path d="M827.82 522.96 L832.82 517.96 L837.82 522.96 L832.82 527.96 Z" fill="#000"/><path d="M849.65 478.57 L854.65 473.57 L859.65 478.57 L854.65 483.57 Z" fill="#000"/><path d="M871.48 477.48 L876.48 472.48 L881.48 477.48 L876.48 482.48 Z" fill="#000"/><path d="M893.32 501.18 L898.32 496.18 L903.32 501.18 L898.32 506.18 Z" fill="#000"/><path d="M915.15 523.77 L920.15 518.77 L925.15 523.77 L920.15 528.77 Z" fill="#000"/><path d="M936.98 488.23 L941.98 483.23 L946.98 488.23 L941.98 493.23 Z" fill="#000"/><text x="554.3" y="537.60" text-anchor="end" font-family="Liberation Sans" font-size="10.5" fill="#3a3a4e">0%</text><text x="554.3" y="506.35" text-anchor="end" font-family="Liberation Sans" font-size="10.5" fill="#3a3a4e">5%</text><text x="554.3" y="475.10" text-anchor="end" font-family="Liberation Sans" font-size="10.5" fill="#3a3a4e">10%</text><text x="554.3" y="443.85" text-anchor="end" font-family="Liberation Sans" font-size="10.5" fill="#3a3a4e">15%</text><text x="554.3" y="412.60" text-anchor="end" font-family="Liberation Sans" font-size="10.5" fill="#3a3a4e">20%</text><text x="554.3" y="381.35" text-anchor="end" font-family="Liberation Sans" font-size="10.5" fill="#3a3a4e">25%</text><text x="554.3" y="350.10" text-anchor="end" font-family="Liberation Sans" font-size="10.5" fill="#3a3a4e">30%</text><text x="554.3" y="318.85" text-anchor="end" font-family="Liberation Sans" font-size="10.5" fill="#3a3a4e">35%</text><text x="554.3" y="287.60" text-anchor="end" font-family="Liberation Sans" font-size="10.5" fill="#3a3a4e">40%</text><text x="956.9" y="506.35" font-family="Liberation Sans" font-size="10.8" fill="#3a3a4e" letter-spacing="-0.1">10,000,000</text><text x="956.9" y="475.10" font-family="Liberation Sans" font-size="10.8" fill="#3a3a4e" letter-spacing="-0.1">20,000,000</text><text x="956.9" y="443.85" font-family="Liberation Sans" font-size="10.8" fill="#3a3a4e" letter-spacing="-0.1">30,000,000</text><text x="956.9" y="412.60" font-family="Liberation Sans" font-size="10.8" fill="#3a3a4e" letter-spacing="-0.1">40,000,000</text><text x="956.9" y="381.35" font-family="Liberation Sans" font-size="10.8" fill="#3a3a4e" letter-spacing="-0.1">50,000,000</text><text x="956.9" y="350.10" font-family="Liberation Sans" font-size="10.8" fill="#3a3a4e" letter-spacing="-0.1">60,000,000</text><text x="956.9" y="318.85" font-family="Liberation Sans" font-size="10.8" fill="#3a3a4e" letter-spacing="-0.1">70,000,000</text><text x="956.9" y="287.60" font-family="Liberation Sans" font-size="10.8" fill="#3a3a4e" letter-spacing="-0.1">80,000,000</text><text x="1012.3" y="537.60" font-family="Liberation Sans" font-size="10.8" fill="#3a3a4e">0</text><text transform="translate(565.52,539.2) rotate(90)" font-family="Liberation Sans" font-size="10.8" fill="#3a3a4e">0-4,999</text><text transform="translate(587.35,539.2) rotate(90)" font-family="Liberation Sans" font-size="10.8" fill="#3a3a4e">5,000-9,999</text><text transform="translate(609.18,539.2) rotate(90)" font-family="Liberation Sans" font-size="10.8" fill="#3a3a4e">10,000-14,999</text><text transform="translate(631.02,539.2) rotate(90)" font-family="Liberation Sans" font-size="10.8" fill="#3a3a4e">15,000-19,999</text><text transform="translate(652.85,539.2) rotate(90)" font-family="Liberation Sans" font-size="10.8" fill="#3a3a4e">20,000-24,999</text><text transform="translate(674.68,539.2) rotate(90)" font-family="Liberation Sans" font-size="10.8" fill="#3a3a4e">25,000-29,999</text><text transform="translate(696.52,539.2) rotate(90)" font-family="Liberation Sans" font-size="10.8" fill="#3a3a4e">30,000-34,999</text><text transform="translate(718.35,539.2) rotate(90)" font-family="Liberation Sans" font-size="10.8" fill="#3a3a4e">35,000-39,999</text><text transform="translate(740.18,539.2) rotate(90)" font-family="Liberation Sans" font-size="10.8" fill="#3a3a4e">40,000-44,999</text><text transform="translate(762.02,539.2) rotate(90)" font-family="Liberation Sans" font-size="10.8" fill="#3a3a4e">45,000-49,999</text><text transform="translate(783.85,539.2) rotate(90)" font-family="Liberation Sans" font-size="10.8" fill="#3a3a4e">50,000-54,999</text><text transform="translate(805.68,539.2) rotate(90)" font-family="Liberation Sans" font-size="10.8" fill="#3a3a4e">55,000-59,999</text><text transform="translate(827.52,539.2) rotate(90)" font-family="Liberation Sans" font-size="10.8" fill="#3a3a4e">60,000-64,999</text><text transform="translate(849.35,539.2) rotate(90)" font-family="Liberation Sans" font-size="10.8" fill="#3a3a4e">65,000-69,999</text><text transform="translate(871.18,539.2) rotate(90)" font-family="Liberation Sans" font-size="10.8" fill="#3a3a4e">70,000-74,999</text><text transform="translate(893.02,539.2) rotate(90)" font-family="Liberation Sans" font-size="10.8" fill="#3a3a4e">75,000-79,999</text><text transform="translate(914.85,539.2) rotate(90)" font-family="Liberation Sans" font-size="10.8" fill="#3a3a4e">80,000-84,999</text><text transform="translate(936.68,539.2) rotate(90)" font-family="Liberation Sans" font-size="10.8" fill="#3a3a4e">85,000-89,999</text><text transform="translate(520.5,465.1) rotate(-90)" font-family="Liberation Sans" font-size="12.35" fill="#6a6c9c">Customer With Sales</text><text transform="translate(1030.5,370.3) rotate(90)" font-family="Liberation Sans" font-size="12.4" fill="#6a6c9c">Sales Amount</text><text x="717.8" y="641.2" font-family="Liberation Sans" font-size="12.4" fill="#6a6c9c">Income Band</text><rect x="1056" y="370" width="10" height="10" fill="url(#lg)"/><rect x="1056" y="404" width="10" height="10" fill="url(#tg)"/><rect x="1056" y="442" width="10" height="2.5" fill="#000"/><path d="M1061 439 L1064.5 443.2 L1061 447.4 L1057.5 443.2 Z" fill="#000"/><text x="1069.1" y="372.4" font-family="Liberation Sans" font-size="10.7" fill="#3e3e56">Customer</text><text x="1069.1" y="382.7" font-family="Liberation Sans" font-size="10.7" fill="#3e3e56">With Sales</text><text x="1069.1" y="402" font-family="Liberation Sans" font-size="10.7" fill="#3e3e56">% of Sales</text><text x="1069.1" y="412.5" font-family="Liberation Sans" font-size="10.7" fill="#3e3e56">Amount -</text><text x="1069.1" y="423.1" font-family="Liberation Sans" font-size="10.7" fill="#3e3e56">Time</text><text x="1069.1" y="440.9" font-family="Liberation Sans" font-size="10.7" fill="#3e3e56">Sales</text><text x="1069.1" y="451.5" font-family="Liberation Sans" font-size="10.7" fill="#3e3e56">Amount</text></svg></body></html>
